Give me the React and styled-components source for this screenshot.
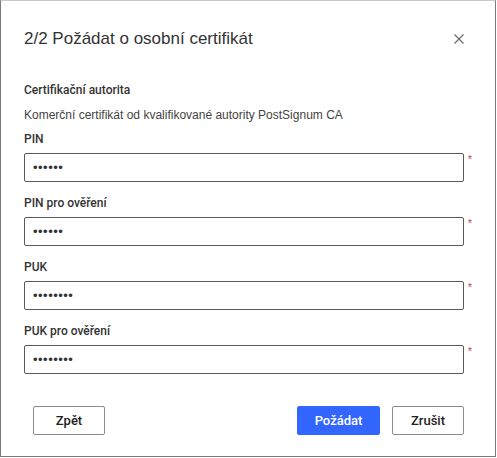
import styled, { createGlobalStyle } from "styled-components";

const GlobalStyle = createGlobalStyle`
  * { box-sizing: border-box; }
  body {
    margin: 0;
    background: #fff;
    font-family: "Liberation Sans", Arial, sans-serif;
    color: #333;
  }
`;

const fields = [
  { label: "PIN", value: "123456" },
  { label: "PIN pro ověření", value: "123456" },
  { label: "PUK", value: "12345678" },
  { label: "PUK pro ověření", value: "12345678" },
];

const App = () => {
  return (
    <>
      <GlobalStyle />
      <Dialog>
        <Header>
          <Title>2/2 Požádat o osobní certifikát</Title>
          <Close aria-label="Zavřít">
            <svg width="10" height="10" viewBox="0 0 10 10">
              <path d="M0.5 0.5 L9.5 9.5 M9.5 0.5 L0.5 9.5" stroke="#666" strokeWidth="1.1" />
            </svg>
          </Close>
        </Header>
        <Body>
          <SectionTitle>Certifikační autorita</SectionTitle>
          <Description>
            Komerční certifikát od kvalifikované autority PostSignum CA
          </Description>
          <Fields>
            {fields.map((f) => (
              <Field key={f.label}>
                <Label>{f.label}</Label>
                <InputRow>
                  <Input type="password" value={f.value} readOnly />
                  <Required>*</Required>
                </InputRow>
              </Field>
            ))}
          </Fields>
        </Body>
        <Footer>
          <Button>Zpět</Button>
          <Actions>
            <Button $primary $width={83}>Požádat</Button>
            <Button>Zrušit</Button>
          </Actions>
        </Footer>
      </Dialog>
    </>
  );
};

const Dialog = styled.div`
  width: 496px;
  height: 457px;
  border: 1px solid #7b7b7b;
  border-top-color: #c8c8c8;
  background: #fff;
  display: flex;
  flex-direction: column;
`;

const Header = styled.div`
  display: flex;
  align-items: center;
  justify-content: space-between;
  padding: 25px 31px 0 23px;
  height: 50px;
`;

const Title = styled.h2`
  margin: 0;
  font-size: 17px;
  line-height: 24px;
  font-weight: 400;
  color: #333;
`;

const Close = styled.button`
  border: 0;
  background: none;
  padding: 0;
  width: 10px;
  height: 10px;
  display: flex;
  cursor: pointer;
`;

const Body = styled.div`
  display: flex;
  flex-direction: column;
  padding: 31px 0 0 23px;
`;

const SectionTitle = styled.div`
  font-family: Roboto, "Liberation Sans", sans-serif;
  font-size: 12px;
  line-height: 16px;
  font-weight: 500;
  color: #333;
`;

const Description = styled.div`
  margin-top: 9px;
  font-size: 12px;
  line-height: 16px;
  color: #444;
`;

const Fields = styled.div`
  margin-top: 8px;
  display: flex;
  flex-direction: column;
  gap: 13px;
`;

const Field = styled.div`
  display: flex;
  flex-direction: column;
  gap: 6px;
`;

const Label = styled.label`
  font-family: Roboto, "Liberation Sans", sans-serif;
  font-size: 12px;
  line-height: 16px;
  font-weight: 500;
  color: #333;
`;

const InputRow = styled.div`
  display: flex;
  align-items: flex-start;
`;

const Input = styled.input`
  width: 440px;
  height: 29px;
  border: 1px solid #5a5a5a;
  border-radius: 2px;
  padding: 0 8px;
  font-family: "Liberation Sans", Arial, sans-serif;
  font-size: 13px;
  color: #333;
  letter-spacing: 0.5px;
  outline: none;
`;

const Required = styled.span`
  color: #c0392b;
  font-size: 10px;
  line-height: 10px;
  margin: 2px 0 0 4px;
`;

const Footer = styled.div`
  display: flex;
  justify-content: space-between;
  padding: 32px 31px 0 32px;
`;

const Actions = styled.div`
  display: flex;
  gap: 12px;
`;

const Button = styled.button`
  width: ${(p) => p.$width || 72}px;
  height: 29px;
  border-radius: 2px;
  border: 1px solid ${(p) => (p.$primary ? "#3366ff" : "#8a8a8a")};
  background: ${(p) => (p.$primary ? "#3366ff" : "#fff")};
  color: ${(p) => (p.$primary ? "#fff" : "#222")};
  font-family: Roboto, "Liberation Sans", sans-serif;
  font-size: 13px;
  font-weight: 500;
  cursor: pointer;
`;

export default App;
